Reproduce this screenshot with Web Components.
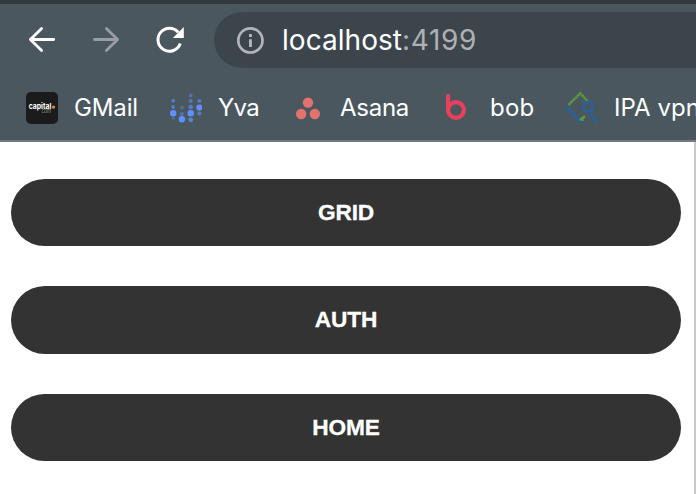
<!DOCTYPE html>
<html lang="en"><head><meta charset="utf-8"><title>localhost:4199</title>
<style>html,body{margin:0;height:100%;overflow:hidden;background:#fff}</style></head>
<body><browser-window></browser-window>
<script>
class Base extends HTMLElement {
  constructor() {
    super();
    this.attachShadow({mode: 'open'}).innerHTML = this.template();
  }
}

// Text whose tracking is adjusted to an advance width given in px.
class FitText extends Base {
  template() {
    return `<style>:host{display:inline-block;white-space:nowrap}</style><span><slot></slot></span>`;
  }
  connectedCallback() {
    const span = this.shadowRoot.querySelector('span');
    const n = this.textContent.length;
    const target = parseFloat(this.getAttribute('width'));
    const natural = span.getBoundingClientRect().width;
    this.style.letterSpacing = ((target - natural) / n).toFixed(3) + 'px';
  }
}

class NavBar extends Base {
  template() {
    return `<style>
      :host{display:flex;height:56px;padding:8px 0 0 26px;align-items:center}
      svg{display:block;flex:none}
      .nav{display:flex;gap:32px;width:188px;flex:none}
      .omni{flex:1;height:56px;border-radius:28px 0 0 28px;background:#3d454c;display:flex;align-items:center;padding-left:22px;gap:16px;
        font:430 28px/56px Inter,"Liberation Sans",sans-serif;color:#fff}
      .port{color:#adb1b5;font-weight:400}
    </style>
    <div class="nav">
      <svg width="32" height="32" fill="none" stroke="#fff" stroke-width="2.8" stroke-linecap="round" stroke-linejoin="round"><path d="M27.7 15.5H4.4M15.6 4.4L4.4 15.5l11.2 11.1"/></svg>
      <svg width="32" height="32" fill="none" stroke="#969da3" stroke-width="2.8" stroke-linecap="round" stroke-linejoin="round"><path d="M4.4 15.5h23.2M16.4 4.4l11.2 11.1-11.2 11.1"/></svg>
      <svg width="32" height="32"><path d="M26.3 19.6A11.5 11.5 0 1 1 24.2 8.2" fill="none" stroke="#fff" stroke-width="3"/><path d="M29.8 3v11H18.9z" fill="#fff"/></svg>
    </div>
    <div class="omni">
      <svg width="30" height="30" viewBox="0 0 30 30"><circle cx="14.4" cy="15.4" r="12.1" fill="none" stroke="#b2b6ba" stroke-width="2.7"/><path d="M13 9h2.9v2.9H13zM13 14.2h2.9V22H13z" fill="#b2b6ba"/></svg>
      <div><fit-text width="120">localhost</fit-text><fit-text class="port" width="75">:4199</fit-text></div>
    </div>`;
  }
}

class BookmarkItem extends Base {
  template() {
    return `<style>
      :host{display:flex;align-items:center;gap:16px;height:32px;flex:none;
        font:430 24px/32px Inter,"Liberation Sans",sans-serif;color:#fff}
      ::slotted(svg){display:block;flex:none}
    </style><slot name="icon"></slot><slot></slot>`;
  }
}

class BookmarkBar extends Base {
  template() {
    const cols = [
      [2.9, [[9.8,4,.6],[16,4,.65],[22.2,6.4,1],[27,3.5,.35]]],
      [11.6, [[16.5,4,.35],[23,4,.5],[28.3,6.5,1]]],
      [20.4, [[4.5,3.8,.45],[10,4,.55],[16,4.5,.65],[22.2,6.5,1],[28.8,4.8,.75]]],
      [29.1, [[10,4,.6],[16.5,6.2,1],[22.5,4,.65]]]
    ];
    const dots = cols.map(([x, ys]) => ys.map(([y, s, o]) =>
      `<circle cx="${x + .3}" cy="${y - 1}" r="${s/2}" fill="#5c91ff" opacity="${o}"/>`).join('')).join('');
    return `<style>
      :host{display:grid;grid-template-columns:144px 121px 150px 124px 190px;height:48px;padding:16px 0 0 26px;align-items:center}
      .cap{font:bold 7.8px Inter,sans-serif}
      .com{font:6.5px Inter,sans-serif}
    </style>
    <bookmark-item><svg slot="icon" width="32" height="32"><rect width="32" height="32" rx="5" fill="#1b1b1c"/>
      <text class="cap" x="2.8" y="17.2" fill="#fff" textLength="22.5" lengthAdjust="spacingAndGlyphs">capital</text><text class="com" x="15.5" y="20.8" fill="#929292" textLength="9.5" lengthAdjust="spacingAndGlyphs">com</text><circle cx="27.5" cy="15.1" r="1.7" fill="#c58b55"/></svg><fit-text width="64">GMail</fit-text></bookmark-item>
    <bookmark-item><svg slot="icon" width="32" height="32">${dots}</svg><fit-text width="41">Yva</fit-text></bookmark-item>
    <bookmark-item style="gap:17px"><svg slot="icon" width="32" height="32" fill="#e2726e"><circle cx="17" cy="10.6" r="5.2"/><circle cx="10.2" cy="22" r="5.2"/><circle cx="23.8" cy="22" r="5.2"/></svg><fit-text width="69">Asana</fit-text></bookmark-item>
    <bookmark-item style="gap:17px"><svg slot="icon" width="32" height="32" fill="none" stroke="#e9405b" stroke-width="4.2" stroke-linecap="round"><path d="M7.1 4v14"/><circle cx="15" cy="18" r="7.9"/></svg><fit-text width="44.5">bob</fit-text></bookmark-item>
    <bookmark-item style="gap:17px"><svg slot="icon" width="32" height="32" fill="none" stroke-width="2.5"><path d="M3.5 13L15.2 1.3l7.3 7.7" stroke="#599b3d" stroke-dasharray="2.7 .4"/><path d="M1.2 14.6L15.5 30.2M24.3 20l7.2 10.7" stroke="#28619b" stroke-width="2.7"/><circle cx="22.8" cy="14.8" r="4.8" stroke="#28619b"/><path d="M15 27.8l5-3.5M17.5 29v-4" stroke="#599b3d"/></svg><fit-text width="86">IPA vpn</fit-text></bookmark-item>`;
  }
}

class PillButton extends Base {
  template() {
    return `<style>
      :host{display:block}
      button{display:block;width:100%;height:100%;border:0;border-radius:34px;background:#333;color:#fff;padding:0;
        font:bold 22.7px/var(--line,67px) "Liberation Sans",Arial,sans-serif;letter-spacing:-.15px;-webkit-text-stroke:.3px #fff}
      span{display:block;padding-bottom:var(--lift,0)}
    </style><button><span><slot></slot></span></button>`;
  }
}

class BrowserWindow extends Base {
  template() {
    return `<style>
      :host{display:flex;flex-direction:column;width:696px;height:494px;overflow:hidden}
      header{flex:none;border-top:4px solid #303a3f;border-bottom:2px solid #727b82;background:#4a575f;height:136px;overflow:hidden}
      main{flex:1;box-sizing:border-box;background:#fff;border-right:2px solid #c9c9cc;padding:37px 13px 0 11px;display:grid;grid-template-rows:67px 68px 67px;align-content:start;row-gap:40px}
      .mid{--line:66px;--lift:2px}
    </style>
    <header><nav-bar></nav-bar><bookmark-bar></bookmark-bar></header>
    <main><pill-button>GRID</pill-button><pill-button class="mid">AUTH</pill-button><pill-button>HOME</pill-button></main>`;
  }
}
customElements.define('fit-text', FitText);
customElements.define('bookmark-item', BookmarkItem);
customElements.define('nav-bar', NavBar);
customElements.define('bookmark-bar', BookmarkBar);
customElements.define('pill-button', PillButton);
customElements.define('browser-window', BrowserWindow);
</script></body></html>
